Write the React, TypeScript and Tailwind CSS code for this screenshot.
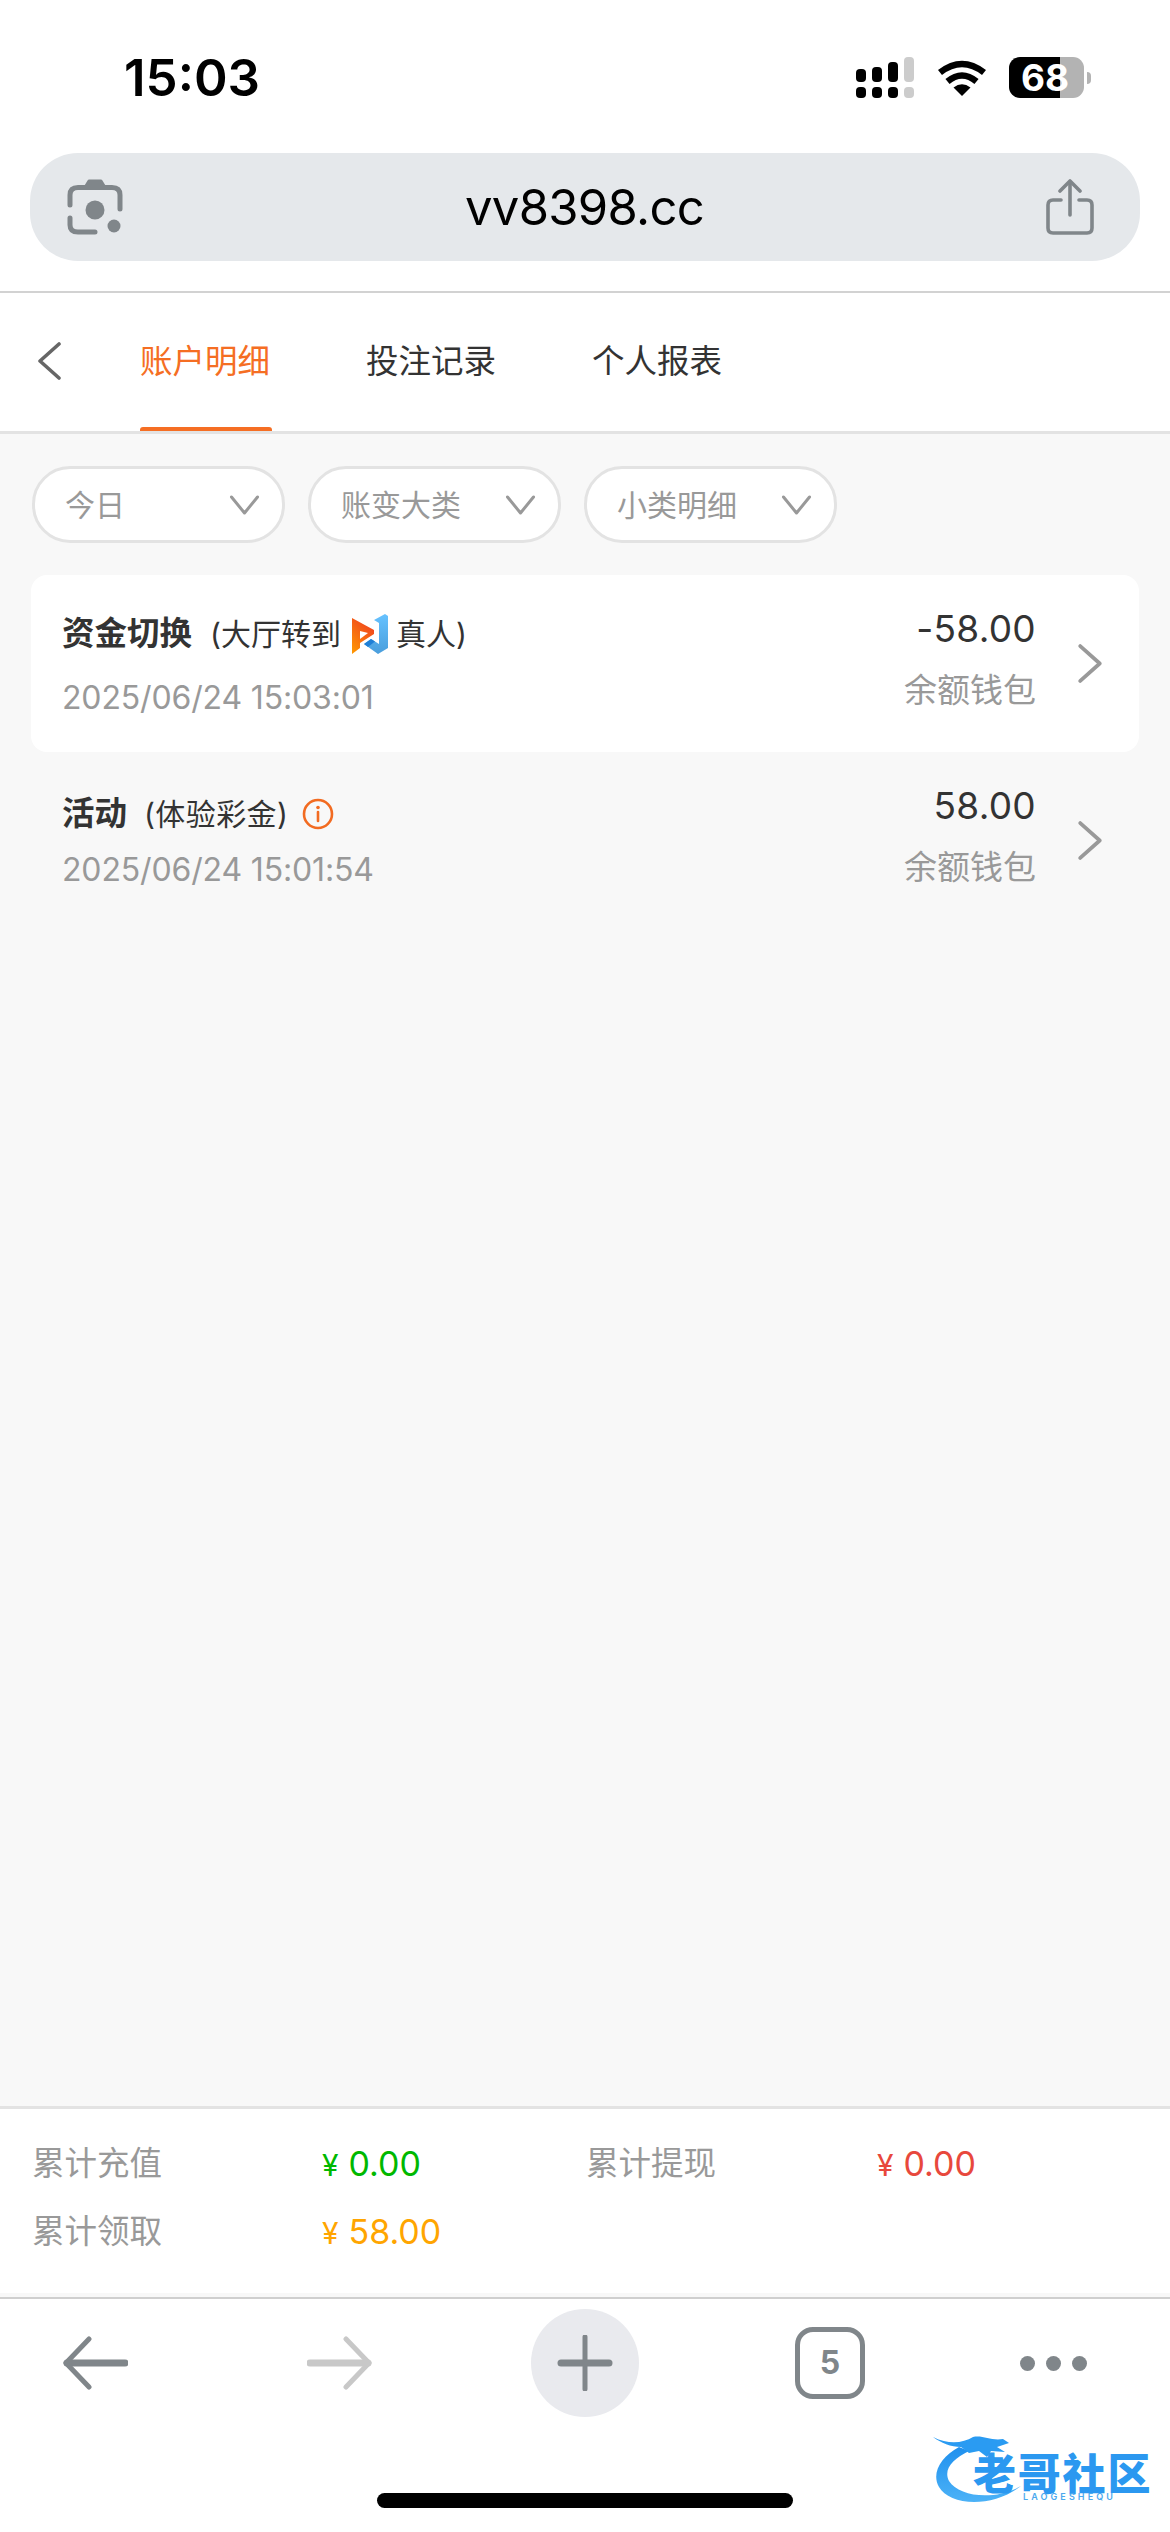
function Chevron({ dir, className }: { dir: "left" | "right" | "down"; className?: string }) {
  const d =
    dir === "left"
      ? "M22 2 L3 19 L22 36"
      : dir === "right"
        ? "M3 2 L22 19 L3 36"
        : "M2 2 L15 18 L28 2";
  const vb = dir === "down" ? "0 0 30 20" : "0 0 25 38";
  return (
    <svg viewBox={vb} className={className} fill="none" stroke="currentColor" strokeWidth={dir === "down" ? 3 : 3.6} strokeLinecap="round" strokeLinejoin="round">
      <path d={d} />
    </svg>
  );
}

function StatusIcons() {
  return (
    <div className="flex items-start">
      <div className="flex flex-col gap-[5px] mt-[57px] mr-[23px]">
        <div className="flex items-end gap-[6px] h-[25px]">
          <div className="w-[10px] h-[13px] rounded-[4px] bg-black" />
          <div className="w-[10px] h-[15px] rounded-[4px] bg-black" />
          <div className="w-[10px] h-[20px] rounded-[4px] bg-black" />
          <div className="w-[10px] h-[25px] rounded-[4px] bg-[#cccccc]" />
        </div>
        <div className="flex gap-[6px] h-[11px]">
          <div className="w-[10px] rounded-[4px] bg-black" />
          <div className="w-[10px] rounded-[4px] bg-black" />
          <div className="w-[10px] rounded-[4px] bg-black" />
          <div className="w-[10px] rounded-[4px] bg-[#cccccc]" />
        </div>
      </div>
      <svg viewBox="0 0 50 37" className="w-[50px] h-[37px] mt-[59px] mr-[22px]">
        <path d="M25 37 L16.5 28.5 Q25 22 33.5 28.5 Z" fill="#000" />
        <path d="M10.5 22.5 Q25 10.5 39.5 22.5" fill="none" stroke="#000" strokeWidth="6.5" />
        <path d="M3 13.5 Q25 -3.5 47 13.5" fill="none" stroke="#000" strokeWidth="6.5" />
      </svg>
      <div className="flex items-center mt-[57px]">
        <div className="relative w-[75px] h-[41px] flex">
          <div className="w-[51px] h-full rounded-l-[11px] bg-black" />
          <div className="w-[24px] h-full rounded-r-[11px] bg-[#b3b3b3]" />
          <span className="absolute left-[12px] top-0 h-full flex items-center text-white font-bold text-[37px] leading-none">68</span>
        </div>
        <div className="w-[4px] h-[12px] ml-[3px] rounded-r-[4px] bg-[#b3b3b3]" />
      </div>
    </div>
  );
}

function LensIcon() {
  return (
    <svg viewBox="0 0 56 56" className="w-[56px] h-[56px]" fill="none" stroke="#80868a" strokeWidth="5" strokeLinecap="round">
      <path d="M18 8.5 L22 2 L34 2 L38 8.5 Z" fill="#80868a" stroke="#80868a" strokeWidth="3" strokeLinejoin="round" />
      <path d="M3 26 L3 16 Q3 8.5 11 8.5 L45 8.5 Q53 8.5 53 16 L53 30" />
      <path d="M3 39 L3 46 Q3 53 11 53 L28 53" />
      <circle cx="28" cy="31" r="9.5" fill="#80868a" stroke="none" />
      <circle cx="47" cy="47" r="6.5" fill="#80868a" stroke="none" />
    </svg>
  );
}

function ShareIcon() {
  return (
    <svg viewBox="0 0 48 56" className="w-[48px] h-[56px]" fill="none" stroke="#80868a" strokeWidth="3.6" strokeLinecap="round" strokeLinejoin="round">
      <path d="M15 21 L7 21 Q2 21 2 26 L2 49 Q2 54 7 54 L41 54 Q46 54 46 49 L46 26 Q46 21 41 21 L33 21" />
      <path d="M24 36 L24 3" />
      <path d="M14 12 L24 2 L34 12" />
    </svg>
  );
}

function GameLogo() {
  return (
    <svg viewBox="0 0 36 40" className="w-[36px] h-[40px] ml-[11px] mr-[8px] shrink-0">
      <defs>
        <linearGradient id="lg1" x1="0" y1="1" x2="0.6" y2="0">
          <stop offset="0" stopColor="#ff9a00" />
          <stop offset="1" stopColor="#f0441f" />
        </linearGradient>
        <linearGradient id="lg2" x1="0.5" y1="0" x2="0.5" y2="1">
          <stop offset="0" stopColor="#66c2ff" />
          <stop offset="1" stopColor="#4a9edc" />
        </linearGradient>
      </defs>
      <path d="M0 4 L22 16 L22 20 L8 29 L8 34 L0 40 Z" fill="url(#lg1)" />
      <path d="M8 17 L8 25 L16 19 Z" fill="#fff" />
      <path d="M36 2 L36 34 L26 40 L12 30 L19 25 L27 30 L27 9 L22 6 L33 0 Z" fill="url(#lg2)" />
      <path d="M12 30 L19 25 L23 27.5 L16 33 Z" fill="#1f7fd6" />
    </svg>
  );
}

function InfoIcon() {
  return (
    <svg viewBox="0 0 32 32" className="w-[32px] h-[32px] ml-[14px] shrink-0" fill="none" stroke="#f26b21" strokeWidth="2.6">
      <circle cx="16" cy="16" r="14" />
      <path d="M16 14 L16 23" strokeLinecap="round" />
      <circle cx="16" cy="9.5" r="1.8" fill="#f26b21" stroke="none" />
    </svg>
  );
}

function Filter({ label }: { label: string }) {
  return (
    <div className="w-[253px] h-[77px] rounded-[38px] border-[3px] border-[#e3e3e3] bg-white flex items-center justify-between pl-[30px] pr-[22px]">
      <span className="text-[30px] leading-none text-[#999999]">{label}</span>
      <Chevron dir="down" className="w-[31px] h-[20px] text-[#999999]" />
    </div>
  );
}

function Row(props: {
  children: React.ReactNode;
  date: string;
  amount: string;
  white?: boolean;
  leftPad: string;
  dateMargin: string;
}) {
  return (
    <div className={`h-[177px] pl-[31px] pr-[32px] flex rounded-[16px] ${props.white ? "bg-white" : ""}`}>
      <div className={`flex-1 ${props.leftPad}`}>
        <div className="h-[44px] flex items-center text-[#333333]">{props.children}</div>
        <div className={`h-[40px] flex items-center text-[32px] text-[#999999] tracking-[-0.15px] ${props.dateMargin}`}>{props.date}</div>
      </div>
      <div className="flex flex-col items-end pt-[34px]">
        <div className="h-[40px] flex items-center text-[37px] text-[#333333] tracking-[0.3px]">{props.amount}</div>
        <div className="h-[40px] mt-[22px] flex items-center text-[33px] text-[#999999]">余额钱包</div>
      </div>
      <div className="w-[71px] flex items-center justify-end">
        <Chevron dir="right" className="w-[26px] h-[39px] text-[#999999] mr-[4px]" />
      </div>
    </div>
  );
}

function Stat({ label, value, color }: { label: string; value: string; color: string }) {
  return (
    <>
      <div className="text-[32.5px] leading-[40px] text-[#999999]">{label}</div>
      <div className={`text-[34px] leading-[40px] ${color}`}>
        <span className="text-[30px] mr-[10px]">¥</span>
        {value}
      </div>
    </>
  );
}

function Watermark() {
  return (
    <div className="absolute left-[925px] top-[2425px] w-[240px] h-[90px]">
      <svg viewBox="0 0 240 90" className="absolute inset-0 w-[240px] h-[90px]">
        <defs>
          <linearGradient id="wg" x1="0" y1="0" x2="0" y2="1">
            <stop offset="0" stopColor="#1f90ee" />
            <stop offset="1" stopColor="#4cb2f7" />
          </linearGradient>
        </defs>
        <path d="M34 22 C16 32 6 48 14 62 C24 80 66 84 96 61 C70 76 34 72 24 56 C18 44 28 34 44 26 Z" fill="url(#wg)" />
        <path d="M8 12 C24 20 38 18 48 12 C58 10 66 16 78 14 L84 18 L72 22 L80 27 L66 26 L62 32 L54 26 L44 28 L36 22 C26 22 16 18 8 12 Z" fill="#2a9bf2" />
      </svg>
      <div className="absolute left-[48px] top-[33px] text-[43px] leading-[33px] font-black tracking-[1.8px] text-[#2b98f0] whitespace-nowrap">老哥社区</div>
      <div className="absolute left-[98px] top-[67px] text-[9px] leading-[10px] font-semibold tracking-[3.1px] text-[#4ba9ee] whitespace-nowrap">LAOGESHEQU</div>
    </div>
  );
}

export default function App() {
  return (
    <div lang="zh-CN" className="relative w-[1170px] h-[2532px] overflow-hidden bg-white flex flex-col [font-family:Inter,'Noto_Sans_CJK_SC',sans-serif]">
      {/* status bar */}
      <div className="h-[153px] shrink-0 flex justify-between pl-[124px] pr-[79px]">
        <div className="text-[51px] leading-[51px] font-semibold text-black mt-[52px]">15:03</div>
        <StatusIcons />
      </div>

      {/* address bar */}
      <div className="shrink-0 mx-[30px] h-[108px] rounded-[48px] bg-[#e5e8eb] flex items-center justify-between pl-[37px] pr-[46px]">
        <LensIcon />
        <div className="text-[49px] leading-none tracking-[-0.7px] text-black">vv8398.cc</div>
        <ShareIcon />
      </div>

      <div className="h-[30px] shrink-0" />
      <div className="h-[2px] shrink-0 bg-[#d2d2d2]" />

      {/* tabs */}
      <div className="h-[138px] shrink-0 flex items-stretch pl-[37px]">
        <div className="w-[103px] flex items-center">
          <Chevron dir="left" className="w-[25px] h-[38px] text-[#666666] mt-[-2px]" />
        </div>
        <div className="flex gap-[96px] text-[32.5px] text-[#333333]">
          <div className="relative flex items-center text-[#f56e23]">
            账户明细
            <div className="absolute left-0 right-[-2px] bottom-0 h-[4px] rounded-t-[3px] bg-[#f56e23]" />
          </div>
          <div className="flex items-center">投注记录</div>
          <div className="flex items-center">个人报表</div>
        </div>
      </div>
      <div className="h-[3px] shrink-0 bg-[#e3e3e3]" />

      {/* main */}
      <div className="flex-1 min-h-0 bg-[#f8f8f8]">
        <div className="flex gap-[23px] pl-[32px] pt-[32px]">
          <Filter label="今日" />
          <Filter label="账变大类" />
          <Filter label="小类明细" />
        </div>
        <div className="mx-[31px] mt-[32px]">
          <Row white date="2025/06/24 15:03:01" amount="-58.00" leftPad="pt-[37px]" dateMargin="mt-[22px]">
            <span className="text-[32.5px] font-bold">资金切换</span>
            <span className="text-[30px] ml-[18px]">(大厅转到</span>
            <GameLogo />
            <span className="text-[30px]">真人)</span>
          </Row>
          <Row date="2025/06/24 15:01:54" amount="58.00" leftPad="pt-[40px]" dateMargin="mt-[14px]">
            <span className="text-[32.5px] font-bold">活动</span>
            <span className="text-[30px] tracking-[0.4px] ml-[17px]">(体验彩金)</span>
            <InfoIcon />
          </Row>
        </div>
      </div>

      {/* totals */}
      <div className="h-[3px] shrink-0 bg-[#e3e3e3]" />
      <div className="h-[184px] shrink-0 pl-[32px] pt-[35px] grid grid-cols-[290px_264px_291px_1fr] auto-rows-[40px] gap-y-[28px]">
        <Stat label="累计充值" value="0.00" color="text-[#00b800]" />
        <Stat label="累计提现" value="0.00" color="text-[#e8483c]" />
        <Stat label="累计领取" value="58.00" color="text-[#ffa500]" />
      </div>
      <div className="h-[4px] shrink-0 bg-[#f8f8f8]" />
      <div className="h-[2px] shrink-0 bg-[#cfcfcf]" />

      {/* browser bar */}
      <div className="h-[233px] shrink-0 flex flex-col">
        <div className="h-[118px] shrink-0 flex items-center pl-[62px] pt-[10px]">
          <svg viewBox="0 0 66 54" className="w-[66px] h-[54px]" fill="none" stroke="#80868a" strokeWidth="7" strokeLinecap="round" strokeLinejoin="round">
            <path d="M63 27 L5 27" />
            <path d="M27 3 L4 27 L27 51" strokeWidth="5" />
          </svg>
          <svg viewBox="0 0 66 54" className="w-[66px] h-[54px] ml-[179px]" fill="none" stroke="#c8c8c8" strokeWidth="7" strokeLinecap="round" strokeLinejoin="round">
            <path d="M3 27 L61 27" />
            <path d="M39 3 L62 27 L39 51" strokeWidth="5" />
          </svg>
          <div className="w-[108px] h-[108px] ml-[158px] rounded-full bg-[#e9eaee] flex items-center justify-center shrink-0">
            <svg viewBox="0 0 56 56" className="w-[56px] h-[56px]" fill="none" stroke="#80868a" strokeLinecap="round">
              <path d="M28 2 L28 54" strokeWidth="5" />
              <path d="M4 28 L52 28" strokeWidth="7" />
            </svg>
          </div>
          <div className="w-[70px] h-[72px] ml-[156px] rounded-[18px] border-[5px] border-[#80868a] flex items-center justify-center text-[#80868a] text-[32px] font-bold leading-none">5</div>
          <div className="flex gap-[11px] ml-[155px]">
            <div className="w-[15px] h-[15px] rounded-full bg-[#80868a]" />
            <div className="w-[15px] h-[15px] rounded-full bg-[#80868a]" />
            <div className="w-[15px] h-[15px] rounded-full bg-[#80868a]" />
          </div>
        </div>
        <div className="flex justify-center mt-[76px]">
          <div className="w-[416px] h-[15px] rounded-full bg-black" />
        </div>
      </div>

      <Watermark />
    </div>
  );
}
